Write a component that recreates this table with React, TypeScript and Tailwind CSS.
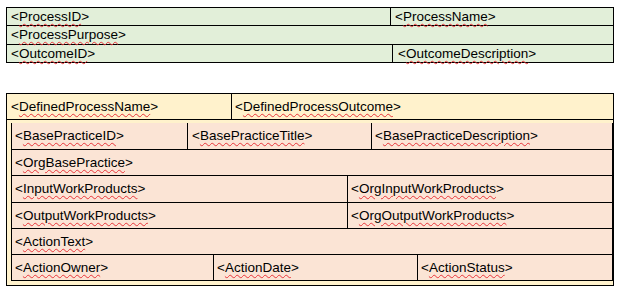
import type { ReactNode } from "react";

function Tag({ name }: { name: string }) {
  return (
    <>
      &lt;
      <span className="underline decoration-wavy decoration-[#e8343a] decoration-1 underline-offset-[2px]">
        {name}
      </span>
      &gt;
    </>
  );
}

function Cell({ w, children, pad = "pl-[4px]" }: { w?: string; children?: ReactNode; pad?: string }) {
  return (
    <div className={`${w ? `${w} shrink-0 border-r border-black` : "flex-1"} flex items-center ${pad} whitespace-nowrap`}>
      {children}
    </div>
  );
}

export default function App() {
  return (
    <div
      className="w-[620px] h-[296px] bg-white text-[13.5px] leading-none text-black overflow-hidden pt-[7px]"
      style={{ fontFamily: '"Liberation Sans", Arial, sans-serif' }}
    >
      {/* process header table */}
      <div className="ml-[6px] w-[608px] border border-black bg-[#e2efd9]">
        <div className="flex h-[17px]">
          <Cell w="w-[384px]"><Tag name="ProcessID" /></Cell>
          <Cell><Tag name="ProcessName" /></Cell>
        </div>
        <div className="flex h-[19px] border-t border-black">
          <Cell><Tag name="ProcessPurpose" /></Cell>
        </div>
        <div className="flex h-[18px] border-t border-black">
          <Cell w="w-[386px]"><Tag name="OutcomeID" /></Cell>
          <Cell pad="pl-[5px]"><Tag name="OutcomeDescription" /></Cell>
        </div>
      </div>

      {/* defined process table */}
      <div className="ml-[6px] mt-[30px] w-[608px] border border-black bg-[#fff2cc]">
        <div className="flex h-[25px]">
          <Cell w="w-[225px]"><Tag name="DefinedProcessName" /></Cell>
          <Cell pad="pl-[3px]"><Tag name="DefinedProcessOutcome" /></Cell>
        </div>
        <div className="border-t border-black pl-[4px] pt-[3px] pb-[4px]">
          <div className="border-l border-r border-b border-black bg-[#fbe4d5]">
            <div className="flex h-[26px]">
              <Cell w="w-[176px]" pad="pl-[3px]"><Tag name="BasePracticeID" /></Cell>
              <Cell w="w-[184px]" pad="pl-[4px]"><Tag name="BasePracticeTitle" /></Cell>
              <Cell pad="pl-[3px]"><Tag name="BasePracticeDescription" /></Cell>
            </div>
            <div className="flex h-[26px] border-t border-black">
              <Cell pad="pl-[3px]"><Tag name="OrgBasePractice" /></Cell>
            </div>
            <div className="flex h-[27px] border-t border-black">
              <Cell w="w-[336px]" pad="pl-[3px]"><Tag name="InputWorkProducts" /></Cell>
              <Cell pad="pl-[3px]"><Tag name="OrgInputWorkProducts" /></Cell>
            </div>
            <div className="flex h-[26px] border-t border-black">
              <Cell w="w-[336px]" pad="pl-[3px]"><Tag name="OutputWorkProducts" /></Cell>
              <Cell pad="pl-[3px]"><Tag name="OrgOutputWorkProducts" /></Cell>
            </div>
            <div className="flex h-[26px] border-t border-black">
              <Cell pad="pl-[3px]"><Tag name="ActionText" /></Cell>
            </div>
            <div className="flex h-[26px] border-t border-black">
              <Cell w="w-[202px]" pad="pl-[3px]"><Tag name="ActionOwner" /></Cell>
              <Cell w="w-[204px]" pad="pl-[3px]"><Tag name="ActionDate" /></Cell>
              <Cell pad="pl-[3px]"><Tag name="ActionStatus" /></Cell>
            </div>
          </div>
        </div>
      </div>
    </div>
  );
}
